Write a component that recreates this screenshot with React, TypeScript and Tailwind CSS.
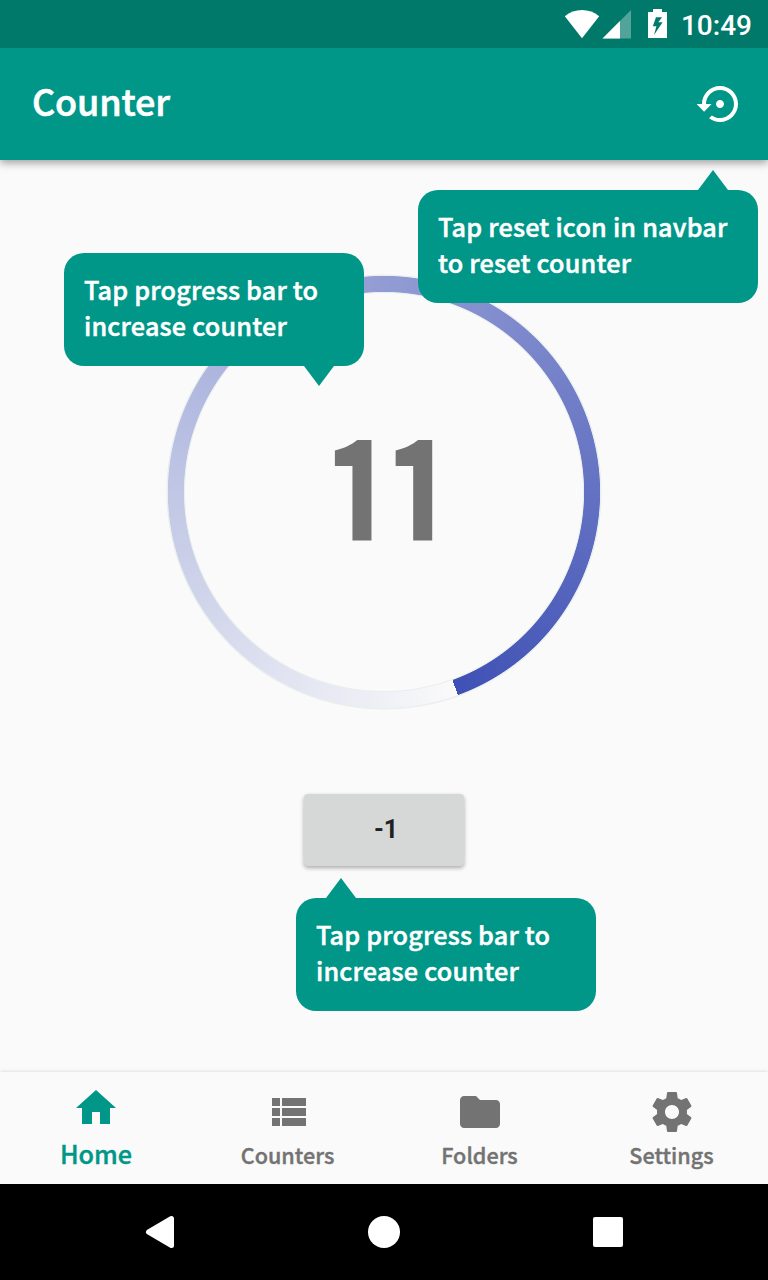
import type { ReactNode } from 'react';

function Icon({ d, className = '' }: { d: string; className?: string }) {
  return (
    <svg viewBox="0 0 24 24" className={`size-12 ${className}`} fill="currentColor">
      <path d={d} />
    </svg>
  );
}

const paths = {
  restore:
    'M14 12c0-1.1-.9-2-2-2s-2 .9-2 2 .9 2 2 2 2-.9 2-2zm-2-9c-4.97 0-9 4.03-9 9H.3l3.75 3.9L7.8 12H5c0-3.87 3.13-7 7-7s7 3.13 7 7-3.13 7-7 7c-1.51 0-2.91-.49-4.06-1.3l-1.42 1.44C8.04 20.3 9.94 21 12 21c4.97 0 9-4.03 9-9s-4.03-9-9-9z',
  home: 'M10 20v-6h4v6h5v-8h3L12 3 2 12h3v8z',
  list: 'M4 14h4v-4H4v4zm0 5h4v-4H4v4zM4 9h4V5H4v4zm5 5h12v-4H9v4zm0 5h12v-4H9v4zM9 5v4h12V5H9z',
  folder: 'M10 4H4c-1.1 0-1.99.9-1.99 2L2 18c0 1.1.9 2 2 2h16c1.1 0 2-.9 2-2V8c0-1.1-.9-2-2-2h-8l-2-2z',
  settings:
    'M19.43 12.98c.04-.32.07-.64.07-.98s-.03-.66-.07-.98l2.11-1.65c.19-.15.24-.42.12-.64l-2-3.46c-.12-.22-.39-.3-.61-.22l-2.49 1c-.52-.4-1.08-.73-1.69-.98l-.38-2.65C14.46 2.18 14.25 2 14 2h-4c-.25 0-.46.18-.49.42l-.38 2.65c-.61.25-1.17.59-1.69.98l-2.49-1c-.23-.09-.49 0-.61.22l-2 3.46c-.13.22-.07.49.12.64l2.11 1.65c-.04.32-.07.65-.07.98s.03.66.07.98l-2.11 1.65c-.19.15-.24.42-.12.64l2 3.46c.12.22.39.3.61.22l2.49-1c.52.4 1.08.73 1.69.98l.38 2.65c.03.24.24.42.49.42h4c.25 0 .46-.18.49-.42l.38-2.65c.61-.25 1.17-.59 1.69-.98l2.49 1c.23.09.49 0 .61-.22l2-3.46c.12-.22.07-.49-.12-.64l-2.11-1.65zM12 15.5c-1.93 0-3.5-1.57-3.5-3.5s1.57-3.5 3.5-3.5 3.5 1.57 3.5 3.5-1.57 3.5-3.5 3.5z',
};

function StatusBar() {
  return (
    <div className="relative z-10 flex h-12 items-start justify-end bg-[#00796b] pr-4 text-white">
      <svg viewBox="0 0 36 30" className="mt-[9px] h-[30px] w-9" fill="currentColor">
        <path d="M.8 7.2C10.5-1.2 25.5-1.2 35.2 7.2L18 29.3z" />
      </svg>
      <svg viewBox="0 0 30 30" className="ml-0.5 mt-[9px] size-[30px]" fill="currentColor">
        <path d="M29 1v28.5H.5z" fillOpacity=".32" />
        <path d="M18 12v17.5H.5z" />
      </svg>
      <svg viewBox="0 0 19 29" className="ml-4 mt-[9px] h-[29px] w-[19px]" fill="currentColor" fillRule="evenodd">
        <path d="M5 0h9v3h5v26H0V3h5zM8 8.2 4.8 17.2H8.4L6 26 14.6 13.3H10.3L14 8.2z" />
      </svg>
      <span className="ml-[14px] mt-[9px] font-[Roboto,sans-serif] text-[28px] font-medium leading-[34px]">10:49</span>
    </div>
  );
}

function Tooltip({ children, className, arrow }: { children: ReactNode; className: string; arrow: string }) {
  return (
    <div
      className={`absolute h-[113px] rounded-[20px] bg-[#009688] px-5 pt-[18px] text-[25.2px] leading-9 font-medium tracking-[0.2px] whitespace-nowrap text-white [-webkit-text-stroke:0.5px] ${className}`}
    >
      {children}
      <svg viewBox="0 0 30 20" className={`absolute h-5 w-[30px] ${arrow}`} fill="#009688">
        <path d="M15 0 30 20H0z" />
      </svg>
    </div>
  );
}

function Tab({ label, d }: { label: string; d: string }) {
  return (
    <div className="flex flex-1 flex-col items-center pt-4 text-[#737373]">
      <Icon d={d} />
      <span className="mt-[3px] pr-px text-[21.6px] leading-8 font-medium [-webkit-text-stroke:0.4px]">{label}</span>
    </div>
  );
}

export default function App() {
  return (
    <div className="flex h-[1280px] w-[768px] flex-col overflow-hidden bg-[#fafafa] font-['Noto_Sans_CJK_SC',sans-serif]">
      <StatusBar />
      <header className="flex h-28 items-center justify-between bg-[#009688] pr-6 pl-8 text-white shadow-[0_3px_8px_rgba(0,0,0,0.36)]">
        <h1 className="mb-2 text-[36px] leading-none font-medium tracking-[-0.15px] [-webkit-text-stroke:0.6px]">Counter</h1>
        <Icon d={paths.restore} />
      </header>

      <main className="relative flex flex-1 flex-col items-center pt-[114px]">
        <div className="relative flex size-[436px] items-center justify-center">
          <div className="absolute inset-0 rounded-full bg-[#e9eeee] [mask:radial-gradient(circle,transparent_198.5px,black_199.5px,black_217px,transparent_218px)]" />
          <div className="absolute inset-0 rounded-full bg-[conic-gradient(from_160deg,#fafafa,#3f51b5)] [mask:radial-gradient(circle,transparent_199.7px,black_200.5px,black_215.7px,transparent_216.5px)]" />
          <span className="inline-block -translate-x-0.5 -translate-y-1 scale-x-[0.77] text-[169px] leading-none font-bold tracking-[-21px] text-[#737373] [clip-path:inset(0_0_32px_0)]">
            11
          </span>
        </div>
        <button className="mt-[84px] h-[72px] w-40 rounded-[4px] bg-[#d6d8d7] pl-1 font-[Roboto,sans-serif] text-[25px] font-bold text-[#202121] shadow-[0_2px_4px_rgba(0,0,0,0.32)]">
          -1
        </button>

        <Tooltip className="top-[30px] left-[418px] w-[340px]" arrow="-top-5 left-[280px]">
          Tap reset icon in navbar
          <br />
          to reset counter
        </Tooltip>
        <Tooltip className="top-[93px] left-16 w-[300px]" arrow="top-[113px] left-60 rotate-180">
          Tap progress bar to
          <br />
          increase counter
        </Tooltip>
        <Tooltip className="top-[738px] left-[296px] w-[300px]" arrow="-top-5 left-[30px]">
          Tap progress bar to
          <br />
          increase counter
        </Tooltip>
      </main>

      <nav className="flex h-28 bg-[#fafafa] shadow-[0_0_4px_rgba(0,0,0,0.16)]">
        <div className="flex flex-1 flex-col items-center pt-3 text-[#009688]">
          <Icon d={paths.home} />
          <span className="mt-[3px] text-[25.2px] leading-9 font-medium [-webkit-text-stroke:0.4px]">Home</span>
        </div>
        <Tab label="Counters" d={paths.list} />
        <Tab label="Folders" d={paths.folder} />
        <Tab label="Settings" d={paths.settings} />
      </nav>

      <div className="relative flex h-24 items-center justify-center gap-44 bg-black text-white">
        <svg viewBox="0 0 48 48" className="size-12" fill="currentColor" stroke="currentColor" strokeWidth="5" strokeLinejoin="round">
          <path d="M12.5 24 35.5 10.5v27z" />
        </svg>
        <div className="flex size-12 items-center justify-center">
          <div className="size-8 rounded-full bg-white" />
        </div>
        <div className="flex size-12 items-center justify-center">
          <div className="size-[30px] rounded-[2px] bg-white" />
        </div>
      </div>
    </div>
  );
}
